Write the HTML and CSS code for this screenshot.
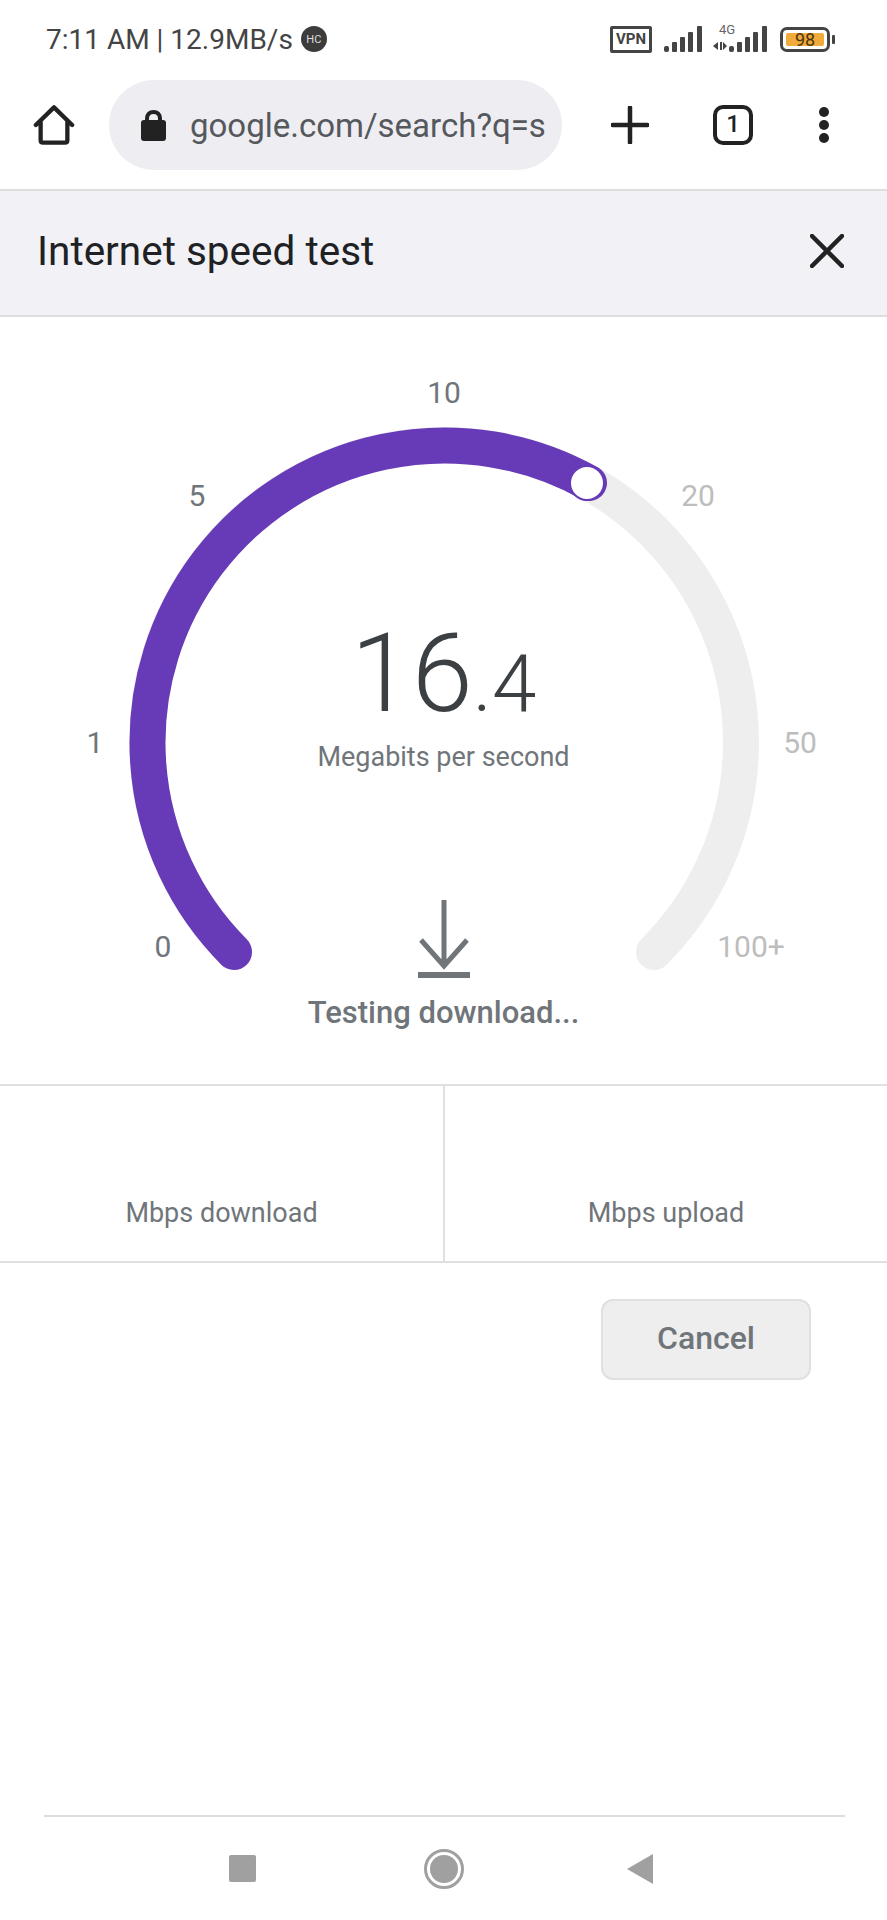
FILE: index.html
```html
<!DOCTYPE html>
<html lang="en">
<head>
  <meta charset="UTF-8" />
  <meta name="viewport" content="width=device-width, initial-scale=1.0"/>
  <title>Internet speed test</title>
  <link rel="stylesheet" href="styles.css">
</head>
<body>
  <div class="page">
    <div class="status-bar">
      <div class="status-left">
        <span>7:11 AM | 12.9MB/s</span>
        <span class="hc-badge">HC</span>
      </div>
      <div class="status-right">
        <span class="vpn">VPN</span>
        <svg class="signal" width="38" height="26" viewBox="0 0 38 26">
          <rect x="0" y="20" width="5" height="6" rx="2"/>
          <rect x="8" y="16" width="5" height="10" rx="1"/>
          <rect x="16" y="11" width="5" height="15" rx="1"/>
          <rect x="24" y="6" width="5" height="20" rx="1"/>
          <rect x="33" y="0" width="5" height="26" rx="1"/>
        </svg>
        <svg class="signal signal-4g" width="54" height="34" viewBox="0 0 54 34">
          <text x="6" y="16" class="net-label">4G</text>
          <path d="M0 28 L5 24 V32 Z M7 24 H9 V32 H7 Z M10 24 L14 28 L10 32 Z"/>
          <rect x="16" y="28" width="5" height="6" rx="2"/>
          <rect x="24" y="24" width="5" height="10" rx="1"/>
          <rect x="32" y="19" width="5" height="15" rx="1"/>
          <rect x="40" y="14" width="5" height="20" rx="1"/>
          <rect x="49" y="8" width="5" height="26" rx="1"/>
        </svg>
        <div class="battery">
          <div class="battery-body"><span class="battery-fill">98</span></div>
          <span class="battery-tip"></span>
        </div>
      </div>
    </div>

    <div class="toolbar">
      <svg class="tool-icon home-icon" width="42" height="42" viewBox="0 0 44 44">
        <path d="M3 22 L22 3.500 L41 22 M8 18 V38 Q8 40.500 10.500 40.500 H33.500 Q36 40.500 36 38 V18" />
      </svg>
      <div class="url-pill">
        <svg class="lock-icon" width="25" height="31" viewBox="0 0 25 31">
          <rect x="0" y="10" width="25" height="21" rx="3"/>
          <path class="shackle" d="M6 12 V8.500 C6 4.500 8.500 2 12.500 2 C16.500 2 19 4.500 19 8.500 V12"/>
        </svg>
        <span class="url-text">google.com/search?q=s</span>
      </div>
      <svg class="tool-icon plus-icon" width="38" height="38" viewBox="0 0 38 38">
        <path d="M19 1.500 V36.500 M1.500 19 H36.500"/>
      </svg>
      <div class="tab-count">1</div>
      <div class="menu-dots"><i></i><i></i><i></i></div>
    </div>

    <div class="sheet-header">
      <h1>Internet speed test</h1>
      <svg class="tool-icon close-icon" width="34" height="34" viewBox="0 0 34 34">
        <path d="M2 2 L32 32 M32 2 L2 32"/>
      </svg>
    </div>

    <div class="gauge">
      <svg class="gauge-arc" width="887" height="767" viewBox="0 0 887 767">
        <path class="arc-track" d="M234 635 A297 297 0 1 1 654 635"/>
        <path class="arc-value" d="M234 635 A297 297 0 0 1 589 166"/>
        <circle class="arc-knob" cx="587" cy="166" r="17"/>
      </svg>
      <span class="tick tick-0">0</span>
      <span class="tick tick-1">1</span>
      <span class="tick tick-5">5</span>
      <span class="tick tick-10">10</span>
      <span class="tick tick-20 off">20</span>
      <span class="tick tick-50 off">50</span>
      <span class="tick tick-100 off">100+</span>

      <div class="speed"><span class="speed-int">16</span><span class="speed-dec">.4</span></div>
      <div class="speed-unit">Megabits per second</div>
      <svg class="down-arrow" width="54" height="78" viewBox="0 0 54 78">
        <path d="M27 0 V64 M4 40 L27 66 L50 40"/>
        <path class="arrow-base" d="M1 75 H53"/>
      </svg>
      <div class="phase">Testing download...</div>
    </div>

    <div class="stats">
      <div class="stat">Mbps download</div>
      <div class="stat">Mbps upload</div>
    </div>

    <div class="actions">
      <button class="cancel">Cancel</button>
    </div>

    <div class="nav-bar">
      <span class="nav-square"></span>
      <span class="nav-circle"><i></i></span>
      <svg class="nav-back" width="27" height="30" viewBox="0 0 27 30">
        <path d="M0 15 L26 0 V30 Z"/>
      </svg>
    </div>
  </div>
</body>
</html>
```

FILE: styles.css
```css
* { box-sizing: border-box; }
body {
  margin: 0;
  background: #fff;
  font-family: Roboto, "Liberation Sans", sans-serif;
  color: #70757a;
}
.page {
  display: flex;
  flex-direction: column;
  height: 1920px;
  overflow: hidden;
}

/* status bar */
.status-bar {
  display: flex;
  justify-content: space-between;
  align-items: center;
  height: 80px;
  padding: 0 52px 2px 46px;
}
.status-left {
  display: flex;
  align-items: center;
  gap: 8px;
  font-size: 28px;
  color: #444;
}
.hc-badge {
  display: flex;
  align-items: center;
  justify-content: center;
  width: 26px;
  height: 26px;
  border-radius: 50%;
  background: #3c3c3c;
  color: #ddd;
  font-size: 11px;
}
.status-right {
  display: flex;
  align-items: center;
  gap: 11px;
}
.vpn {
  width: 42px;
  height: 27px;
  margin-right: 1px;
  border: 3px solid #444;
  border-radius: 2px;
  color: #444;
  font-size: 15px;
  font-weight: 700;
  line-height: 21px;
  text-align: center;
}
.signal { fill: #444; }
.signal-4g { margin: 0 2px 8px 0; }
.net-label { font-size: 13px; fill: #666; font-family: Roboto, sans-serif; }
.battery {
  display: flex;
  align-items: center;
  gap: 2px;
}
.battery-body {
  width: 50px;
  height: 25px;
  padding: 3px;
  border: 3px solid #444;
  border-radius: 7px;
}
.battery-fill {
  display: block;
  height: 100%;
  background: #f0ab3c;
  border-radius: 2px;
  color: #4a3410;
  font-size: 18px;
  line-height: 14px;
  text-align: center;
}
.battery-tip {
  width: 3px;
  height: 9px;
  background: #444;
  border-radius: 1px;
}

/* browser toolbar */
.toolbar {
  display: flex;
  align-items: center;
  height: 109px;
  padding: 0 0 19px 33px;
}
.tool-icon {
  fill: none;
  stroke: #222;
  stroke-width: 4.500;
  stroke-linecap: round;
  stroke-linejoin: round;
  flex: none;
}
.url-pill {
  display: flex;
  align-items: center;
  width: 453px;
  height: 90px;
  margin-left: 34px;
  padding-left: 32px;
  background: #eeeef2;
  border-radius: 45px;
}
.lock-icon { fill: #222; flex: none; }
.lock-icon .shackle { fill: none; stroke: #222; stroke-width: 4; }
.url-text {
  margin-left: 24px;
  font-size: 33px;
  color: #55585c;
}
.plus-icon { margin-left: 49px; }
.tab-count {
  width: 40px;
  height: 40px;
  margin-left: 64px;
  border: 4.500px solid #222;
  border-radius: 10px;
  color: #222;
  font-size: 24px;
  font-weight: 500;
  line-height: 31px;
  text-align: center;
}
.menu-dots {
  display: flex;
  flex-direction: column;
  gap: 3px;
  margin-left: 66px;
}
.menu-dots i {
  width: 10px;
  height: 10px;
  border-radius: 50%;
  background: #222;
}

/* sheet title */
.sheet-header {
  display: flex;
  justify-content: space-between;
  align-items: center;
  height: 128px;
  padding: 0 43px 5px 37px;
  background: #f2f2f6;
  border-top: 2px solid #ddd;
  border-bottom: 2px solid #ddd;
}
.sheet-header h1 {
  margin: 0;
  font-size: 40.500px;
  font-weight: 400;
  color: #202124;
}

/* gauge */
.gauge {
  position: relative;
  display: flex;
  flex-direction: column;
  align-items: center;
  height: 767px;
  padding-top: 323px;
}
.gauge-arc { position: absolute; left: 0; top: 0; }
.arc-track, .arc-value {
  fill: none;
  stroke-width: 36;
  stroke-linecap: round;
}
.arc-track { stroke: #eeeeee; }
.arc-value { stroke: #673ab7; }
.arc-knob { fill: #fff; stroke: #673ab7; stroke-width: 2; }
.tick {
  position: absolute;
  transform: translate(-50%, -50%);
  font-size: 30px;
  line-height: 1;
}
.tick.off { color: #bdbdbd; }
.tick-0 { left: 163px; top: 630px; }
.tick-1 { left: 95px; top: 426px; }
.tick-5 { left: 197px; top: 179px; }
.tick-10 { left: 444px; top: 76px; }
.tick-20 { left: 698px; top: 179px; }
.tick-50 { left: 800px; top: 426px; }
.tick-100 { left: 751px; top: 630px; }
.speed {
  position: relative;
  color: #3c4043;
  font-weight: 300;
  line-height: 68px;
  white-space: nowrap;
}
.speed-int { font-size: 110px; }
.speed-dec { font-size: 80px; }
.speed-unit {
  position: relative;
  margin-top: 1px;
  font-size: 27px;
  line-height: 32px;
}
.down-arrow {
  position: relative;
  margin-top: 127px;
  fill: none;
  stroke: #70757a;
  stroke-width: 5;
}
.arrow-base { stroke-width: 6; }
.phase {
  position: relative;
  margin-top: 17px;
  font-size: 31px;
  font-weight: 500;
  line-height: 36px;
}

/* results */
.stats {
  display: grid;
  grid-template-columns: 445px 1fr;
  height: 179px;
  border-top: 2px solid #e0e0e0;
  border-bottom: 2px solid #e0e0e0;
}
.stat {
  padding-top: 111px;
  font-size: 27px;
  line-height: 32px;
  text-align: center;
}
.stat:first-child { border-right: 2px solid #e0e0e0; }

.actions {
  display: flex;
  justify-content: flex-end;
  padding: 36px 76px 0 0;
}
.cancel {
  width: 210px;
  height: 81px;
  padding: 0 0 4px;
  background: #eeeeee;
  border: 2px solid #e0e0e0;
  border-radius: 12px;
  color: #70757a;
  font-family: inherit;
  font-size: 32px;
  font-weight: 500;
}

/* android navigation */
.nav-bar {
  display: flex;
  justify-content: space-between;
  align-items: center;
  height: 105px;
  margin: auto 42px 0 44px;
  padding: 0 191px 0 185px;
  border-top: 2px solid #ddd;
}
.nav-square {
  width: 27px;
  height: 27px;
  background: #a0a0a0;
  border-radius: 2px;
}
.nav-circle {
  display: flex;
  align-items: center;
  justify-content: center;
  width: 40px;
  height: 40px;
  margin-left: 5px;
  border: 3px solid #a0a0a0;
  border-radius: 50%;
}
.nav-circle i {
  width: 28px;
  height: 28px;
  background: #a0a0a0;
  border-radius: 50%;
}
.nav-back { fill: #a0a0a0; }
```
